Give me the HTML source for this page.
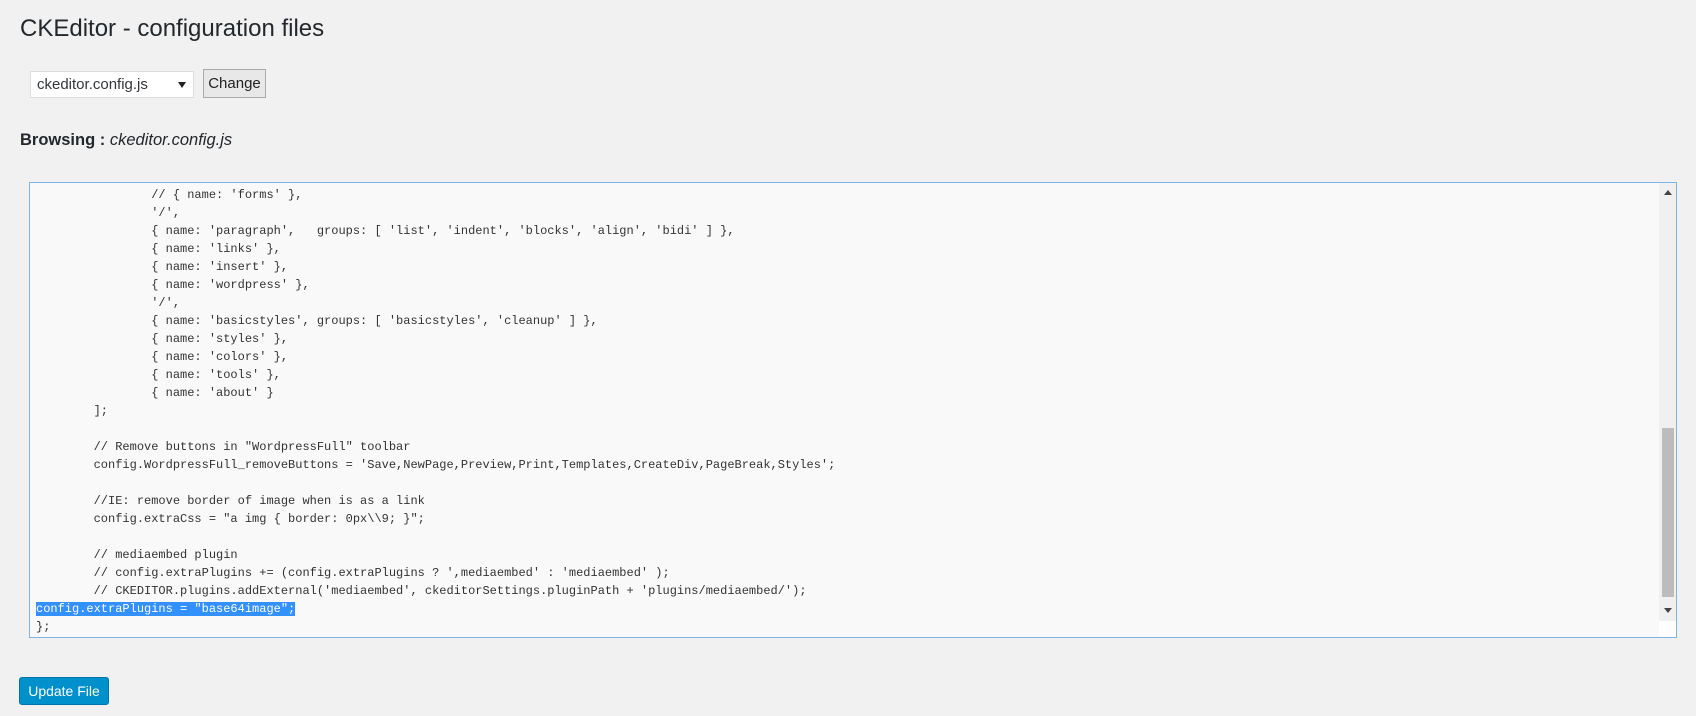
<!DOCTYPE html>
<html><head><meta charset="utf-8"><style>
body{margin:0;background:#f1f1f1;font-family:"Liberation Sans",sans-serif;color:#23282d;width:1696px;height:716px;overflow:hidden;position:relative}
h1{position:absolute;left:20px;top:13px;margin:0;font-size:24px;font-weight:normal;line-height:32px}
.sel{position:absolute;left:30px;top:71px;width:164px;height:27px;background:#fff;border:1px solid #ddd;box-sizing:border-box;font-size:15px;line-height:26px;padding-left:6px;color:#32373c}
.sel:after{content:"";position:absolute;right:7px;top:10px;border:4px solid transparent;border-top:6px solid #222;border-bottom:0}
.btn{position:absolute;left:203px;top:69px;width:63px;height:29px;background:#e8e8e8;border:1px solid #aaa;box-sizing:border-box;font-size:15px;line-height:27px;text-align:center;color:#222}
.brow{position:absolute;left:20px;top:131px;font-size:16.5px;font-weight:bold}
.brow i{font-weight:normal}
.ta{position:absolute;left:29px;top:182px;width:1648px;height:456px;background:#f9f9f9;border:1px solid #7eb4e2;box-sizing:border-box;overflow:hidden}
pre{margin:0;position:absolute;left:6px;top:3px;font-family:"Liberation Mono",monospace;font-size:12px;line-height:18px;color:#333;tab-size:8}
.hl{background:#3390ff;color:#fff}
.sb{position:absolute;right:0;top:0;width:17px;height:100%;background:#f0f0f0}
.th{position:absolute;left:3px;top:245px;width:12px;height:169px;background:#bcbcbc}
.up{position:absolute;left:5px;top:7px;border:4px solid transparent;border-bottom:5px solid #444;border-top:0}
.dn{position:absolute;left:5px;top:425px;border:4px solid transparent;border-top:5px solid #444;border-bottom:0}
.rs{position:absolute;left:0;bottom:0;width:17px;height:16px;background:#fff}
.up2{position:absolute;left:19px;top:677px;width:90px;height:28px;background:#0091cd;border:1px solid #0073aa;border-radius:3px;box-sizing:border-box;color:#fff;font-size:14px;line-height:26px;text-align:center}
</style></head><body>
<h1>CKEditor - configuration files</h1>
<div class="sel">ckeditor.config.js</div>
<div class="btn">Change</div>
<div class="brow">Browsing : <i>ckeditor.config.js</i></div>
<div class="ta"><pre>		// { name: 'forms' },
		'/',
		{ name: 'paragraph',   groups: [ 'list', 'indent', 'blocks', 'align', 'bidi' ] },
		{ name: 'links' },
		{ name: 'insert' },
		{ name: 'wordpress' },
		'/',
		{ name: 'basicstyles', groups: [ 'basicstyles', 'cleanup' ] },
		{ name: 'styles' },
		{ name: 'colors' },
		{ name: 'tools' },
		{ name: 'about' }
	];

	// Remove buttons in "WordpressFull" toolbar
	config.WordpressFull_removeButtons = 'Save,NewPage,Preview,Print,Templates,CreateDiv,PageBreak,Styles';

	//IE: remove border of image when is as a link
	config.extraCss = "a img { border: 0px\\9; }";

	// mediaembed plugin
	// config.extraPlugins += (config.extraPlugins ? ',mediaembed' : 'mediaembed' );
	// CKEDITOR.plugins.addExternal('mediaembed', ckeditorSettings.pluginPath + 'plugins/mediaembed/');
<span class="hl">config.extraPlugins = "base64image";</span>
};</pre>
<div class="sb"><div class="up"></div><div class="th"></div><div class="dn"></div><div class="rs"></div></div>
</div>
<div class="up2">Update File</div>
</body></html>
